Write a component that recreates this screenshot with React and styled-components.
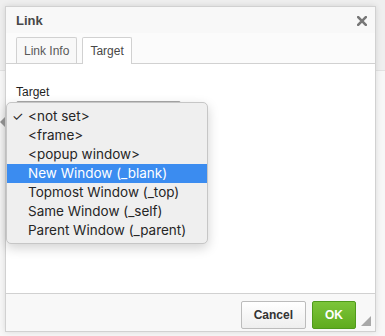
import React from "react";
import styled, { createGlobalStyle } from "styled-components";

const Global = createGlobalStyle`
  html, body { margin: 0; padding: 0; }
  body {
    width: 385px;
    height: 336px;
    overflow: hidden;
    font-family: "Liberation Sans", Arial, sans-serif;
    background: linear-gradient(#efefef 0 70px, #e2e2e2 70px 71px, #f7f7f7 71px);
  }
`;

const Page = styled.div`
  padding: 6px 0 0 5px;
`;

const Dialog = styled.div`
  position: relative;
  width: 371px;
  height: 326px;
  box-sizing: border-box;
  border: 1px solid #d1d1d1;
  background: #fff;
  box-shadow: 0 0 6px rgba(0, 0, 0, 0.12);
  display: flex;
  flex-direction: column;
`;

const TitleBar = styled.div`
  height: 26px;
  flex: none;
  display: flex;
  align-items: center;
  justify-content: space-between;
  padding: 0 8px 0 10px;
  background: #f8f8f8;
  font-size: 13px;
  font-weight: bold;
  color: #484848;
`;

const CloseIcon = styled.svg`
  display: block;
  margin-top: 1px;
`;

const TabStrip = styled.div`
  height: 30px;
  flex: none;
  display: flex;
  align-items: flex-end;
  gap: 5px;
  padding-left: 10px;
  background: #fbfbfb;
  border-bottom: 1px solid #d1d1d1;
`;

const Tab = styled.div`
  box-sizing: border-box;
  padding: 0 7px;
  display: flex;
  align-items: center;
  font-size: 12px;
  color: ${(p) => (p.$active ? "#484848" : "#595959")};
  background: ${(p) => (p.$active ? "#fff" : "#f8f8f8")};
  border: 1px solid #d1d1d1;
  border-bottom: none;
  border-radius: 2px 2px 0 0;
  margin-bottom: ${(p) => (p.$active ? "-1px" : "0")};
  height: ${(p) => (p.$active ? "27px" : "26px")};
`;

const Body = styled.div`
  position: relative;
  flex: 1;
  padding: 20px 10px 0 10px;
`;

const Label = styled.div`
  font-size: 12px;
  line-height: 16px;
  color: #1e1e1e;
`;

const SelectBox = styled.div`
  margin-top: 1px;
  width: 165px;
  height: 26px;
  box-sizing: border-box;
  border: 1px solid #a8a8a8;
  border-radius: 2px;
  background: #f2f2f2;
`;

const Menu = styled.div`
  position: absolute;
  left: 0px;
  top: 38px;
  width: 202px;
  box-sizing: border-box;
  padding: 4px 0 3px;
  background: #efefef;
  border: 1px solid #c6c6c6;
  border-radius: 5px;
  box-shadow: 0 4px 12px rgba(0, 0, 0, 0.18);
  font-family: Inter, "Noto Sans", sans-serif;
  font-size: 13.5px;
  color: #262626;

  &::before {
    content: "";
    position: absolute;
    left: -7px;
    top: 14px;
    border-style: solid;
    border-width: 5px 5px 5px 0;
    border-color: transparent #8c8c8c transparent transparent;
  }
`;

const Option = styled.div`
  position: relative;
  height: 19px;
  line-height: 19px;
  padding-left: 21px;
  white-space: nowrap;
  background: ${(p) => (p.$selected ? "#3b8cf0" : "transparent")};
  color: ${(p) => (p.$selected ? "#fff" : "#262626")};
`;

const Check = styled.span`
  position: absolute;
  left: 5px;
  top: 0;
  font-size: 13px;
`;

const Footer = styled.div`
  height: 37px;
  flex: none;
  display: flex;
  align-items: center;
  justify-content: flex-end;
  gap: 6px;
  padding-right: 19px;
  background: #f8f8f8;
  border-top: 1px solid #d1d1d1;
`;

const Button = styled.button`
  height: 28px;
  box-sizing: border-box;
  padding: 0 12px;
  margin-top: 4px;
  font-family: "Liberation Sans", Arial, sans-serif;
  font-size: 12px;
  font-weight: bold;
  border-radius: 2px;
  cursor: pointer;
  color: ${(p) => (p.$primary ? "#fff" : "#333")};
  border: 1px solid ${(p) => (p.$primary ? "#4f9a1b" : "#bcbcbc")};
  background: ${(p) =>
    p.$primary
      ? "linear-gradient(#7cc53a, #5fab1e)"
      : "linear-gradient(#ffffff, #eeeeee)"};
`;

const Resize = styled.div`
  position: absolute;
  right: 4px;
  bottom: 5px;
  width: 0;
  height: 0;
  border-style: solid;
  border-width: 0 0 10px 10px;
  border-color: transparent transparent #a8a8a8 transparent;
`;

const options = [
  "<not set>",
  "<frame>",
  "<popup window>",
  "New Window (_blank)",
  "Topmost Window (_top)",
  "Same Window (_self)",
  "Parent Window (_parent)",
];

export default function App() {
  return (
    <>
      <Global />
      <Page>
        <Dialog>
          <TitleBar>
            <span>Link</span>
            <CloseIcon width="10" height="10" viewBox="0 0 10 10">
              <path d="M1.2 1.2 L8.8 8.8 M8.8 1.2 L1.2 8.8" stroke="#777" strokeWidth="2.6" strokeLinecap="square" />
            </CloseIcon>
          </TitleBar>
          <TabStrip>
            <Tab>Link Info</Tab>
            <Tab $active>Target</Tab>
          </TabStrip>
          <Body>
            <Label>Target</Label>
            <SelectBox />
            <Menu>
              {options.map((o, i) => (
                <Option key={o} $selected={i === 3}>
                  {i === 0 && <Check>✓</Check>}
                  {o}
                </Option>
              ))}
            </Menu>
          </Body>
          <Footer>
            <Button>Cancel</Button>
            <Button $primary>OK</Button>
          </Footer>
          <Resize />
        </Dialog>
      </Page>
    </>
  );
}
